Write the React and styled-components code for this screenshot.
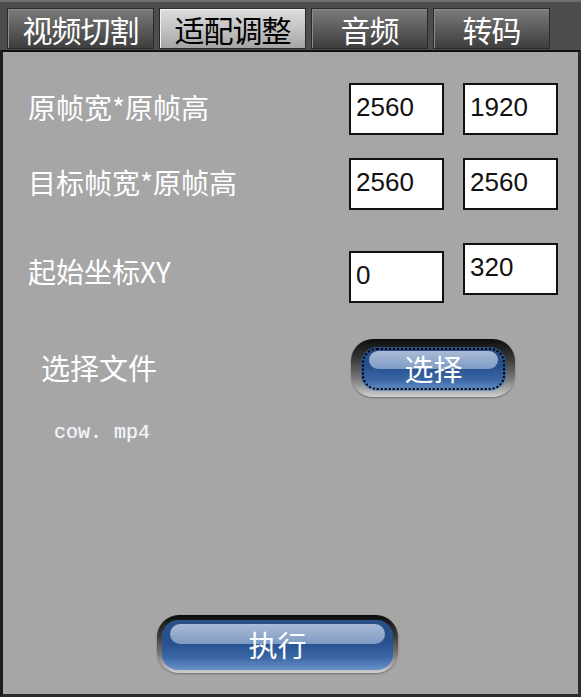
import React from "react";
import styled, { createGlobalStyle } from "styled-components";

const GlobalStyle = createGlobalStyle`
  html, body {
    margin: 0;
    padding: 0;
    background: #4d4d4d;
  }
  * {
    box-sizing: border-box;
  }
`;

const CJK = `"Noto Sans CJK SC", "Noto Sans", sans-serif`;

const tabs = ["视频切割", "适配调整", "音频", "转码"];

const rows = [
  { label: "原帧宽*原帧高", values: ["2560", "1920"] },
  { label: "目标帧宽*原帧高", values: ["2560", "2560"] },
  { label: "起始坐标XY", values: ["0", "320"], lowered: 0 },
];

const App = () => {
  return (
    <Screen>
      <GlobalStyle />
      <TabBar>
        {tabs.map((t, i) => (
          <Tab key={t} active={i === 1} wide={t.length > 2}>
            {t}
          </Tab>
        ))}
      </TabBar>
      <Panel>
        <Rows>
          {rows.map((r, ri) => (
            <Row key={r.label} tall={ri === 2}>
              <Label>{r.label}</Label>
              {r.values.map((v, vi) => (
                <Field
                  key={vi}
                  readOnly
                  defaultValue={v}
                  lowered={r.lowered === vi}
                />
              ))}
            </Row>
          ))}
          <FileRow>
            <FileLabel>选择文件</FileLabel>
            <GlassButton focused width={164}>
              <GlassFace focused>
                <span>选择</span>
              </GlassFace>
            </GlassButton>
          </FileRow>
          <FileName>cow. mp4</FileName>
        </Rows>
        <Footer>
          <GlassButton width={241}>
            <GlassFace>
              <span>执行</span>
            </GlassFace>
          </GlassButton>
        </Footer>
      </Panel>
    </Screen>
  );
};

const Screen = styled.div`
  width: 581px;
  height: 697px;
  display: flex;
  flex-direction: column;
  background: #4d4d4d;
  border-top: 2px solid #6e6e6e;
  overflow: hidden;
`;

const TabBar = styled.div`
  display: flex;
  gap: 5px;
  padding: 6px 0 0 7px;
  height: 48px;
`;

const Tab = styled.div`
  width: ${(p) => (p.wide ? "147px" : "117px")};
  height: 41px;
  display: flex;
  align-items: center;
  justify-content: center;
  font-family: ${CJK};
  font-size: 30px;
  line-height: 1;
  letter-spacing: -1px;
  color: ${(p) => (p.active ? "#000" : "#fff")};
  border: 1px solid #2a2a2a;
  box-shadow: inset 1px 1px 0 ${(p) => (p.active ? "#f2f2f2" : "#8c8c8c")};
  background: ${(p) =>
    p.active
      ? "linear-gradient(to bottom, #dcdcdc 0%, #c4c4c4 50%, #a4a4a4 100%)"
      : "linear-gradient(to bottom, #7c7c7c 0%, #5c5c5c 50%, #3e3e3e 100%)"};
`;

const Panel = styled.div`
  flex: 1;
  display: flex;
  flex-direction: column;
  background: #a6a6a6;
  border-top: 2px solid #111;
  border-left: 3px solid #1c1c1c;
  border-right: 3px solid #2c2c2c;
  border-bottom: 3px solid #2c2c2c;
`;

const Rows = styled.div`
  display: flex;
  flex-direction: column;
  padding: 31px 20px 0 25px;
`;

const Row = styled.div`
  display: flex;
  align-items: center;
  gap: 19px;
  height: ${(p) => (p.tall ? "60px" : "52px")};
  margin-bottom: ${(p) => (p.tall ? "36px" : "23px")};
  margin-top: ${(p) => (p.tall ? "10px" : "0")};
`;

const Label = styled.div`
  flex: 1;
  font-family: ${CJK};
  font-size: 28px;
  line-height: 1;
  color: #fff;
  white-space: nowrap;
  margin-top: -4px;
`;

const Field = styled.input`
  width: 95px;
  height: 52px;
  border: 2px solid #111;
  background: #fff;
  padding: 0 0 4px 5px;
  font-family: "Liberation Sans", Arial, sans-serif;
  font-size: 26px;
  color: #111;
  outline: none;
  align-self: ${(p) => (p.lowered ? "flex-end" : "flex-start")};
`;

const FileRow = styled.div`
  display: flex;
  align-items: center;
  height: 58px;
`;

const FileLabel = styled.div`
  flex: 0 0 323px;
  padding-left: 13px;
  font-family: ${CJK};
  font-size: 29px;
  line-height: 1;
  color: #fff;
  margin-top: -2px;
`;

const FileName = styled.div`
  margin-top: 24px;
  padding-left: 26px;
  font-family: "Liberation Mono", "DejaVu Sans Mono", monospace;
  font-size: 20px;
  color: #f4f4f4;
  text-shadow: 0 0 1px #c8d8f0;
`;

const Footer = styled.div`
  margin-top: auto;
  padding: 0 0 21px 154px;
  display: flex;
`;

const GlassButton = styled.div`
  width: ${(p) => p.width}px;
  height: 58px;
  padding: ${(p) => (p.focused ? "8px 9px 6px 10px" : "5px 5px 3px 5px")};
  border-radius: 22px;
  background: linear-gradient(
    to bottom,
    #0c0c0c 0%,
    #3a3a3a 35%,
    #7c7c7c 70%,
    #d0d0d0 100%
  );
  box-shadow: 0 1px 2px rgba(0, 0, 0, 0.35);
  display: flex;
`;

const GlassFace = styled.div`
  position: relative;
  flex: 1;
  display: flex;
  align-items: center;
  justify-content: center;
  border-radius: 16px;
  background: linear-gradient(
    to bottom,
    #2b4f86 0%,
    #27508e 45%,
    #3b67a6 75%,
    #6a92c8 100%
  );
  font-family: ${CJK};
  font-size: 29px;
  line-height: 1;
  color: #fff;
  outline: ${(p) => (p.focused ? "2px dotted #000" : "none")};
  outline-offset: -3px;

  &::before {
    content: "";
    position: absolute;
    top: 4px;
    left: 8px;
    right: 8px;
    height: 40%;
    border-radius: 10px;
    background: linear-gradient(to bottom, #a9bbd5 0%, #7f9bc4 100%);
  }

  & > span {
    position: relative;
    margin-top: -2px;
  }
`;

export default App;
